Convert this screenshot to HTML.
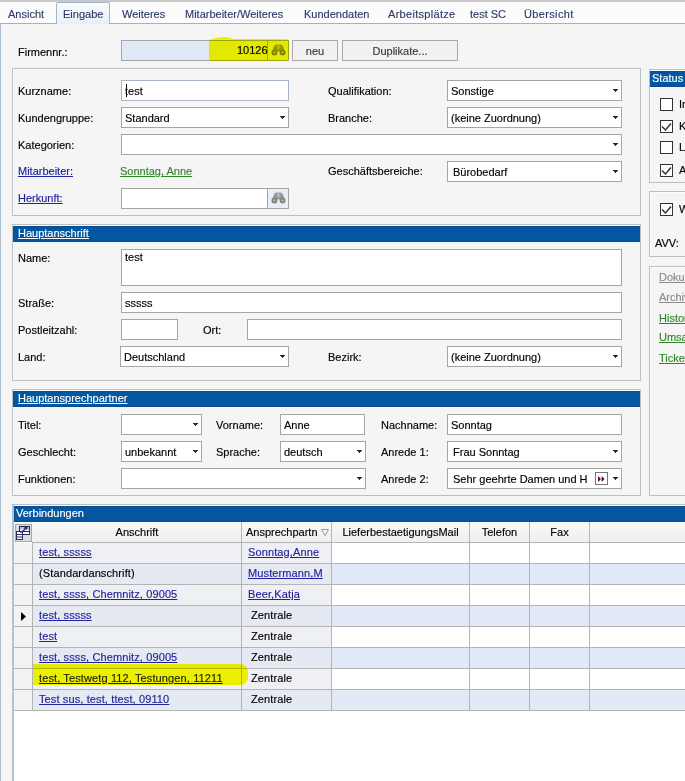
<!DOCTYPE html>
<html><head><meta charset="utf-8">
<style>
*{box-sizing:border-box;margin:0;padding:0}
html,body{width:685px;height:781px;overflow:hidden}
body{position:relative;-webkit-text-stroke:0.15px currentColor;background:#f5f5f5;font-family:"Liberation Sans",sans-serif;font-size:11px;color:#000}
.a{position:absolute}
.t{position:absolute;white-space:nowrap;line-height:13px}
.f{position:absolute;background:#fff;border:1px solid #a5a5a5;height:21px}
.c{position:absolute;background:#fff;border:1px solid #a5a5a5;height:21px}
.c::after{content:"";position:absolute;right:3px;top:8px;width:5px;height:3px;background:linear-gradient(#2a2a2a,#2a2a2a) 0 0/5px 1px no-repeat,linear-gradient(#2a2a2a,#2a2a2a) 1px 1px/3px 1px no-repeat,linear-gradient(#2a2a2a,#2a2a2a) 2px 2px/1px 1px no-repeat}
.fv{position:absolute;left:3px;top:4px;white-space:nowrap;line-height:13px}
.g{position:absolute;border:1px solid #babfc4;box-shadow:inset 1px 1px 0 #fafcff}
.hd{position:absolute;background:#0357a1;box-shadow:inset 0 1px 0 #0b4d8c,inset 0 -1px 0 #0b4d8c;color:#fff;height:16px;line-height:15px;padding-left:5px;white-space:nowrap}
.hd u{text-decoration:underline}
.lk{color:#23229e;text-decoration:underline}
.gr{color:#2e872a;text-decoration:underline}
.cb{position:absolute;width:13px;height:13px;border:1px solid #333;background:#fff}
.cb svg{position:absolute;left:0;top:0}
.btn{position:absolute;background:#f1f1f1;border:1px solid #a9a9a9;height:21px;text-align:center;line-height:21px;color:#3a3a3a}
.tab{position:absolute;top:9px;color:#2c3b68;white-space:nowrap;line-height:11px}
.row{position:absolute;left:13px;width:672px;height:21px;border-bottom:1px solid #a8a8a8}
.cell{position:absolute;top:0;height:21px;border-right:1px solid #a8a8a8}
</style></head><body>

<!-- top strip -->
<div class="a" style="left:0;top:0;width:685px;height:2px;background:#c8c8c8"></div>
<div class="a" style="left:0;top:2px;width:685px;height:21px;background:#fcfcfc"></div>
<div class="a" style="left:0;top:23px;width:685px;height:1px;background:#9fb3c6"></div>
<div class="a" style="left:56px;top:2px;width:54px;height:22px;background:linear-gradient(#fafcff,#e8eff8);border:1px solid #a3b6c9;border-bottom:none;border-radius:2px 2px 0 0"></div>
<div class="tab" style="left:8px">Ansicht</div>
<div class="tab" style="left:63px">Eingabe</div>
<div class="tab" style="left:122px">Weiteres</div>
<div class="tab" style="left:185px">Mitarbeiter/Weiteres</div>
<div class="tab" style="left:304px">Kundendaten</div>
<div class="tab" style="left:388px;letter-spacing:0.3px">Arbeitsplätze</div>
<div class="tab" style="left:470px">test SC</div>
<div class="tab" style="left:524px;letter-spacing:0.35px">Übersicht</div>
<!-- content left border -->
<div class="a" style="left:0;top:23px;width:1px;height:758px;background:#a9bdd0"></div>

<!-- Firmennr row -->
<div class="t" style="left:18px;top:46px">Firmennr.:</div>
<div class="f" style="left:121px;top:40px;width:168px;background:#e1e9f6"></div>
<div class="a" style="left:267px;top:41px;width:1px;height:19px;background:#a5a5a5"></div>
<div class="t" style="left:237px;top:44px">10126</div>
<svg class="a" style="left:271px;top:44px" width="15" height="12"><path d="M1.8 7.5 C1.8 3.5 3.5 0.6 5.6 0.6 L9.4 0.6 C11.5 0.6 13.2 3.5 13.2 7.5 Z" fill="#9a9a9a"/><path d="M6.3 1.5 L8.7 1.5 L8.2 5 L6.8 5 Z" fill="#c4c4c4"/><circle cx="3.4" cy="8.4" r="2.9" fill="#7c7c7c"/><circle cx="11.6" cy="8.4" r="2.9" fill="#7c7c7c"/><circle cx="3.4" cy="8.4" r="1.3" fill="#b5b5b5"/><circle cx="11.6" cy="8.4" r="1.3" fill="#b5b5b5"/></svg>
<div class="btn" style="left:292px;top:40px;width:46px">neu</div>
<div class="btn" style="left:342px;top:40px;width:116px">Duplikate...</div>

<!-- Group 1 -->
<div class="g" style="left:12px;top:68px;width:629px;height:148px"></div>
<div class="t" style="left:18px;top:85px">Kurzname:</div>
<div class="f" style="left:121px;top:80px;width:168px;border-color:#a7b4cc"><span class="fv">test</span></div>
<div class="a" style="left:126px;top:84px;width:1px;height:13px;background:#000"></div>
<div class="t" style="left:18px;top:112px">Kundengruppe:</div>
<div class="c" style="left:121px;top:107px;width:168px"><span class="fv">Standard</span></div>
<div class="t" style="left:18px;top:139px">Kategorien:</div>
<div class="c" style="left:121px;top:134px;width:501px"></div>
<div class="t lk" style="left:18px;top:165px">Mitarbeiter:</div>
<div class="t gr" style="left:120px;top:165px">Sonntag, Anne</div>
<div class="t lk" style="left:18px;top:192px">Herkunft:</div>
<div class="f" style="left:121px;top:188px;width:168px"></div>
<div class="a" style="left:267px;top:189px;width:21px;height:19px;background:#e8eef8;border-left:1px solid #a5a5a5"></div>
<svg class="a" style="left:271px;top:192px" width="15" height="12"><path d="M1.8 7.5 C1.8 3.5 3.5 0.6 5.6 0.6 L9.4 0.6 C11.5 0.6 13.2 3.5 13.2 7.5 Z" fill="#9a9a9a"/><path d="M6.3 1.5 L8.7 1.5 L8.2 5 L6.8 5 Z" fill="#c4c4c4"/><circle cx="3.4" cy="8.4" r="2.9" fill="#7c7c7c"/><circle cx="11.6" cy="8.4" r="2.9" fill="#7c7c7c"/><circle cx="3.4" cy="8.4" r="1.3" fill="#b5b5b5"/><circle cx="11.6" cy="8.4" r="1.3" fill="#b5b5b5"/></svg>

<div class="t" style="left:328px;top:85px">Qualifikation:</div>
<div class="c" style="left:447px;top:80px;width:175px"><span class="fv">Sonstige</span></div>
<div class="t" style="left:328px;top:112px">Branche:</div>
<div class="c" style="left:447px;top:107px;width:175px"><span class="fv">(keine Zuordnung)</span></div>
<div class="t" style="left:328px;top:165px">Geschäftsbereiche:</div>
<div class="c" style="left:447px;top:161px;width:175px"><span class="fv" style="left:5px">Bürobedarf</span></div>

<!-- Right panels -->
<div class="g" style="left:649px;top:69px;width:40px;height:114px"></div>
<div class="hd" style="left:650px;top:71px;width:40px;padding-left:2px">Status</div>
<div class="cb" style="left:660px;top:98px"></div><div class="t" style="left:679px;top:98px">In</div>
<div class="cb ck" style="left:660px;top:120px"><svg width="11" height="11"><path d="M1 5.5 L4.5 9 L10 2.5" fill="none" stroke="#333" stroke-width="1.5"/></svg></div><div class="t" style="left:679px;top:120px">K</div>
<div class="cb" style="left:660px;top:141px"></div><div class="t" style="left:679px;top:141px">L</div>
<div class="cb ck" style="left:660px;top:164px"><svg width="11" height="11"><path d="M1 5.5 L4.5 9 L10 2.5" fill="none" stroke="#333" stroke-width="1.5"/></svg></div><div class="t" style="left:679px;top:164px">A</div>

<div class="g" style="left:649px;top:191px;width:40px;height:66px"></div>
<div class="cb ck" style="left:660px;top:203px"><svg width="11" height="11"><path d="M1 5.5 L4.5 9 L10 2.5" fill="none" stroke="#333" stroke-width="1.5"/></svg></div><div class="t" style="left:679px;top:203px">W</div>
<div class="t" style="left:655px;top:237px">AVV:</div>

<div class="g" style="left:649px;top:266px;width:40px;height:230px"></div>
<div class="t" style="left:659px;top:271px;color:#8a8a8a;text-decoration:underline">Dokumente</div>
<div class="t" style="left:659px;top:291px;color:#8a8a8a;text-decoration:underline">Archiv</div>
<div class="t gr" style="left:659px;top:312px">Historie</div>
<div class="t gr" style="left:659px;top:331px">Umsatz</div>
<div class="t gr" style="left:659px;top:352px">Tickets</div>

<!-- Hauptanschrift -->
<div class="g" style="left:12px;top:224px;width:629px;height:157px"></div>
<div class="hd" style="left:13px;top:226px;width:627px"><u>Hauptanschrift</u></div>
<div class="t" style="left:18px;top:252px">Name:</div>
<div class="f" style="left:121px;top:249px;width:501px;height:37px"><span class="fv" style="top:1px">test</span></div>
<div class="t" style="left:18px;top:297px">Straße:</div>
<div class="f" style="left:121px;top:292px;width:501px"><span class="fv">sssss</span></div>
<div class="t" style="left:18px;top:324px">Postleitzahl:</div>
<div class="f" style="left:121px;top:319px;width:57px"></div>
<div class="t" style="left:203px;top:324px">Ort:</div>
<div class="f" style="left:247px;top:319px;width:375px"></div>
<div class="t" style="left:18px;top:351px">Land:</div>
<div class="c" style="left:120px;top:346px;width:169px"><span class="fv">Deutschland</span></div>
<div class="t" style="left:328px;top:351px">Bezirk:</div>
<div class="c" style="left:447px;top:346px;width:175px"><span class="fv">(keine Zuordnung)</span></div>

<!-- Hauptansprechpartner -->
<div class="g" style="left:12px;top:389px;width:629px;height:107px"></div>
<div class="hd" style="left:13px;top:391px;width:627px"><u>Hauptansprechpartner</u></div>
<div class="t" style="left:18px;top:419px">Titel:</div>
<div class="c" style="left:121px;top:414px;width:81px"></div>
<div class="t" style="left:216px;top:419px">Vorname:</div>
<div class="f" style="left:280px;top:414px;width:85px"><span class="fv">Anne</span></div>
<div class="t" style="left:381px;top:419px">Nachname:</div>
<div class="f" style="left:447px;top:414px;width:175px"><span class="fv">Sonntag</span></div>
<div class="t" style="left:18px;top:446px">Geschlecht:</div>
<div class="c" style="left:121px;top:441px;width:81px"><span class="fv">unbekannt</span></div>
<div class="t" style="left:216px;top:446px">Sprache:</div>
<div class="c" style="left:280px;top:441px;width:86px"><span class="fv">deutsch</span></div>
<div class="t" style="left:381px;top:446px">Anrede 1:</div>
<div class="c" style="left:447px;top:441px;width:175px"><span class="fv" style="left:5px">Frau Sonntag</span></div>
<div class="t" style="left:18px;top:473px">Funktionen:</div>
<div class="c" style="left:121px;top:468px;width:245px"></div>
<div class="t" style="left:381px;top:473px">Anrede 2:</div>
<div class="c" style="left:447px;top:468px;width:175px"><span class="fv" style="left:5px">Sehr geehrte Damen und H</span><svg class="a" style="left:147px;top:3px" width="14" height="14"><rect x="0.5" y="0.5" width="12" height="12" fill="#fff" stroke="#767676"/><path d="M3 4 L6 7 L3 10 Z M6.6 4 L9.6 7 L6.6 10 Z" fill="#5c0d4e"/></svg></div>

<!-- Verbindungen -->
<div class="g" style="left:12px;top:504px;width:680px;height:280px;background:#fff;border-left:2px solid #b3c2d2"></div>
<div class="hd" style="left:14px;top:506px;width:671px;padding-left:2px">Verbindungen</div>
<!--GRID-->
<div class="a" style="left:14px;top:522px;width:671px;height:20px;background:linear-gradient(#f8f8f8,#efefef)"></div>
<div class="a" style="left:32px;top:542px;width:653px;height:1px;background:#b4b4b4"></div>
<div class="a" style="left:14px;top:543px;width:18px;height:20px;background:#f3f3f3"></div>
<div class="a" style="left:33px;top:543px;width:208px;height:20px;background:#eef0f3"></div>
<div class="a" style="left:242px;top:543px;width:89px;height:20px;background:#eef0f3"></div>
<div class="a" style="left:332px;top:543px;width:353px;height:20px;background:#ffffff"></div>
<div class="a" style="left:14px;top:563px;width:671px;height:1px;background:#b4b4b4"></div>
<div class="a" style="left:14px;top:564px;width:18px;height:20px;background:#f3f3f3"></div>
<div class="a" style="left:33px;top:564px;width:208px;height:20px;background:#e4e9f2"></div>
<div class="a" style="left:242px;top:564px;width:89px;height:20px;background:#e4e9f2"></div>
<div class="a" style="left:332px;top:564px;width:353px;height:20px;background:#e3eaf7"></div>
<div class="a" style="left:14px;top:584px;width:671px;height:1px;background:#b4b4b4"></div>
<div class="a" style="left:14px;top:585px;width:18px;height:20px;background:#f3f3f3"></div>
<div class="a" style="left:33px;top:585px;width:208px;height:20px;background:#eef0f3"></div>
<div class="a" style="left:242px;top:585px;width:89px;height:20px;background:#eef0f3"></div>
<div class="a" style="left:332px;top:585px;width:353px;height:20px;background:#ffffff"></div>
<div class="a" style="left:14px;top:605px;width:671px;height:1px;background:#b4b4b4"></div>
<div class="a" style="left:14px;top:606px;width:18px;height:20px;background:#f3f3f3"></div>
<div class="a" style="left:33px;top:606px;width:208px;height:20px;background:#e4e9f2"></div>
<div class="a" style="left:242px;top:606px;width:89px;height:20px;background:#e4e9f2"></div>
<div class="a" style="left:332px;top:606px;width:353px;height:20px;background:#e3eaf7"></div>
<div class="a" style="left:14px;top:626px;width:671px;height:1px;background:#b4b4b4"></div>
<div class="a" style="left:14px;top:627px;width:18px;height:20px;background:#f3f3f3"></div>
<div class="a" style="left:33px;top:627px;width:208px;height:20px;background:#eef0f3"></div>
<div class="a" style="left:242px;top:627px;width:89px;height:20px;background:#eef0f3"></div>
<div class="a" style="left:332px;top:627px;width:353px;height:20px;background:#ffffff"></div>
<div class="a" style="left:14px;top:647px;width:671px;height:1px;background:#b4b4b4"></div>
<div class="a" style="left:14px;top:648px;width:18px;height:20px;background:#f3f3f3"></div>
<div class="a" style="left:33px;top:648px;width:208px;height:20px;background:#e4e9f2"></div>
<div class="a" style="left:242px;top:648px;width:89px;height:20px;background:#e4e9f2"></div>
<div class="a" style="left:332px;top:648px;width:353px;height:20px;background:#e3eaf7"></div>
<div class="a" style="left:14px;top:668px;width:671px;height:1px;background:#b4b4b4"></div>
<div class="a" style="left:14px;top:669px;width:18px;height:20px;background:#f3f3f3"></div>
<div class="a" style="left:33px;top:669px;width:208px;height:20px;background:#eef0f3"></div>
<div class="a" style="left:242px;top:669px;width:89px;height:20px;background:#eef0f3"></div>
<div class="a" style="left:332px;top:669px;width:353px;height:20px;background:#ffffff"></div>
<div class="a" style="left:14px;top:689px;width:671px;height:1px;background:#b4b4b4"></div>
<div class="a" style="left:14px;top:690px;width:18px;height:20px;background:#f3f3f3"></div>
<div class="a" style="left:33px;top:690px;width:208px;height:20px;background:#e4e9f2"></div>
<div class="a" style="left:242px;top:690px;width:89px;height:20px;background:#e4e9f2"></div>
<div class="a" style="left:332px;top:690px;width:353px;height:20px;background:#e3eaf7"></div>
<div class="a" style="left:14px;top:710px;width:671px;height:1px;background:#b4b4b4"></div>
<div class="t lk" style="letter-spacing:0.12px;left:39px;top:546px">test, sssss</div>
<div class="t lk" style="letter-spacing:0.12px;left:248px;top:546px">Sonntag,Anne</div>
<div class="t " style="letter-spacing:0.12px;left:39px;top:567px">(Standardanschrift)</div>
<div class="t lk" style="letter-spacing:0.12px;left:248px;top:567px">Mustermann,M</div>
<div class="t lk" style="letter-spacing:0.12px;left:39px;top:588px">test, ssss, Chemnitz, 09005</div>
<div class="t lk" style="letter-spacing:0.12px;left:248px;top:588px">Beer,Katja</div>
<div class="t lk" style="letter-spacing:0.12px;left:39px;top:609px">test, sssss</div>
<div class="t " style="letter-spacing:0.12px;left:251px;top:609px">Zentrale</div>
<div class="t lk" style="letter-spacing:0.12px;left:39px;top:630px">test</div>
<div class="t " style="letter-spacing:0.12px;left:251px;top:630px">Zentrale</div>
<div class="t lk" style="letter-spacing:0.12px;left:39px;top:651px">test, ssss, Chemnitz, 09005</div>
<div class="t " style="letter-spacing:0.12px;left:251px;top:651px">Zentrale</div>
<div class="t lk" style="letter-spacing:0.12px;left:39px;top:672px">test, Testwetg 112, Testungen, 11211</div>
<div class="t " style="letter-spacing:0.12px;left:251px;top:672px">Zentrale</div>
<div class="t lk" style="letter-spacing:0.12px;left:39px;top:693px">Test sus, test, ttest, 09110</div>
<div class="t " style="letter-spacing:0.12px;left:251px;top:693px">Zentrale</div>
<div class="a" style="left:32px;top:542px;width:1px;height:168px;background:#b4b4b4"></div>
<div class="a" style="left:241px;top:522px;width:1px;height:188px;background:#b4b4b4"></div>
<div class="a" style="left:331px;top:522px;width:1px;height:188px;background:#b4b4b4"></div>
<div class="a" style="left:469px;top:522px;width:1px;height:188px;background:#b4b4b4"></div>
<div class="a" style="left:529px;top:522px;width:1px;height:188px;background:#b4b4b4"></div>
<div class="a" style="left:589px;top:522px;width:1px;height:188px;background:#b4b4b4"></div>
<div class="t" style="left:33px;top:526px;width:208px;text-align:center">Anschrift</div>
<div class="t" style="left:246px;top:526px">Ansprechpartn</div>
<div class="t" style="left:332px;top:526px;width:137px;text-align:center">LieferbestaetigungsMail</div>
<div class="t" style="left:470px;top:526px;width:59px;text-align:center">Telefon</div>
<div class="t" style="left:530px;top:526px;width:59px;text-align:center">Fax</div>
<svg class="a" style="left:320px;top:527px" width="10" height="10"><path d="M1.5 2.5 L8.5 2.5 L5 8.5 Z" fill="none" stroke="#9a9a9a" stroke-width="1"/></svg>
<svg class="a" style="left:15px;top:524px" width="17" height="18"><rect x="0.5" y="0.5" width="16" height="17" fill="#dedede" stroke="#a9a9a9"/><rect x="4.5" y="2.5" width="10" height="8" fill="#fff" stroke="#2a2a5a"/><rect x="5" y="3" width="9" height="2.5" fill="#b8b8ee"/><rect x="1.5" y="7.5" width="6" height="8" fill="#fff" stroke="#2a2a5a"/><path d="M1.5 10.5 H7.5 M1.5 13 H7.5 M8 7.5 H14.5" stroke="#2a2a5a" stroke-width="1"/><path d="M5 8 Q9 8 10.5 3.5" fill="none" stroke="#2a2a5a" stroke-width="1.3"/><path d="M9 3.5 L12.5 2.5 L12 6 Z" fill="#2a2a5a"/></svg>
<svg class="a" style="left:20px;top:611px" width="8" height="11"><path d="M1 1 L6 5.5 L1 10 Z" fill="#000"/></svg>

<!--/GRID-->

<!-- yellow highlights -->
<div class="a" style="left:33px;top:664px;width:215px;height:21px;background:#eaf200;mix-blend-mode:darken;border-radius:0 8px 8px 0"></div>
<div class="a" style="left:209px;top:39px;width:80px;height:22px;background:#eaf200;mix-blend-mode:darken;border-radius:2px 3px 4px 3px"></div>
<div class="a" style="left:212px;top:37px;width:22px;height:6px;background:#eaf200;mix-blend-mode:darken;border-radius:50%"></div>
</body></html>
